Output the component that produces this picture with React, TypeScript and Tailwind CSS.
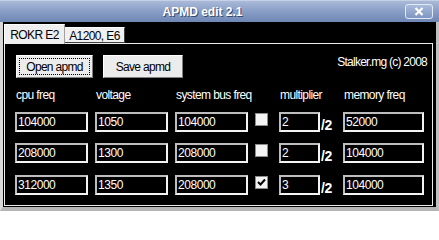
import React from "react";

const sans = { fontFamily: '"Liberation Sans", Arial, sans-serif' };

function Box({ value, w }: { value: string; w: string }) {
  return (
    <div
      className={`${w} h-[20px] bg-black border-2 border-t-[#bdbdbd] border-l-[#bdbdbd] border-b-[#f4f4f4] border-r-[#f4f4f4] flex items-center pl-[1px] text-white text-[12px] leading-none tracking-[-0.45px]`}
    >
      {value}
    </div>
  );
}

function Check({ checked }: { checked?: boolean }) {
  return (
    <div className="w-[13px] h-[13px] mt-[1px] bg-[#f4f4f4] border border-[#8c8c8c] flex items-center justify-center">
      {checked && (
        <svg width="9" height="9" viewBox="0 0 9 9">
          <path d="M1 4 L3.5 6.5 L8 1.5" stroke="#000" strokeWidth="2" fill="none" />
        </svg>
      )}
    </div>
  );
}

function Row({ cpu, volt, bus, checked, mult, mem, className }: { cpu: string; volt: string; bus: string; checked?: boolean; mult: string; mem: string; className?: string }) {
  return (
    <div className={`grid grid-cols-[80px_80px_80px_24px_64px_81px] ${className ?? ""}`}>
      <Box value={cpu} w="w-[73px]" />
      <Box value={volt} w="w-[73px]" />
      <Box value={bus} w="w-[73px]" />
      <Check checked={checked} />
      <div className="flex items-start">
        <Box value={mult} w="w-[41px]" />
        <span className="text-white text-[14px] font-bold leading-none mt-[6px] ml-[1px] tracking-[-0.3px]">
          /2
        </span>
      </div>
      <Box value={mem} w="w-[81px]" />
    </div>
  );
}

export default function App() {
  return (
    <div className="w-[439px] h-[211px] flex flex-col bg-[#c8c8c8] overflow-hidden text-[12px]" style={sans}>
      {/* title bar */}
      <div className="h-[22px] flex items-center bg-gradient-to-b from-[#aab9d8] via-[#889ec6] to-[#6f87b5] border-t border-[#c4d0e6]">
        <div className="flex-1 text-center text-white text-[12px] font-bold [text-shadow:1px_1px_0_#3a4a6a]">
          APMD edit 2.1
        </div>
        <div className="w-[28px] h-[15px] mr-[6px] rounded-[3px] border border-[#e4eaf4] bg-gradient-to-b from-[#a9badb] to-[#7f96c2] flex items-center justify-center">
          <svg width="10" height="9" viewBox="0 0 10 9">
            <path d="M1.5 1 L8.5 8 M8.5 1 L1.5 8" stroke="#fff" strokeWidth="2.2" />
          </svg>
        </div>
      </div>
      {/* body */}
      <div className="flex-1 flex flex-col bg-black border-l-[3px] border-r-[3px] border-b-[4px] border-l-[#d8d8d8] border-r-[#c0c0c0] border-b-[#b4b4b4]">
        {/* tabs */}
        <div className="h-[21px] flex items-end pl-[1px] relative z-10">
          <div className="w-[61px] h-[20px] -mb-px bg-[#eeeeee] border-t border-l border-r border-t-white border-l-white border-r-[#a0a0a0] flex items-center justify-center text-black text-[12px] whitespace-nowrap tracking-[-0.6px]">
            ROKR E2
          </div>
          <div className="w-[60px] h-[16px] bg-[#f0f0f0] border-t border-r border-t-white border-r-[#404040] shadow-[inset_0_-1px_0_#404040] flex items-center justify-center text-black text-[12px] whitespace-nowrap tracking-[-0.6px]">
            A1200, E6
          </div>
        </div>
        {/* panel */}
        <div className="flex-1 ml-[1px] mr-[3px] mb-[1px] border border-[#ececec] flex flex-col">
          <div className="flex items-start mt-[11px] pl-[11px] pr-[5px]">
            <div className="w-[77px] h-[23px] bg-[#ececec] border border-t-white border-l-white border-b-[#808080] border-r-[#808080] p-[2px]">
              <div className="w-full h-full border border-dotted border-black flex items-center justify-center text-black text-[12px] tracking-[-0.7px]">
                Open apmd
              </div>
            </div>
            <div className="w-[80px] h-[23px] ml-[10px] bg-[#ececec] border border-t-white border-l-white border-b-[#808080] border-r-[#808080] flex items-center justify-center text-black text-[12px] tracking-[-0.7px]">
              Save apmd
            </div>
            <div className="flex-1 text-right text-white text-[12px] leading-[14px] tracking-[-0.75px]">Stalker.mg (c) 2008</div>
          </div>
          <div className="mt-[10px] ml-[11px] grid grid-cols-[80px_80px_80px_24px_64px_81px] text-white text-[12px] leading-[14px] tracking-[-0.6px]">
            <span>cpu freq</span>
            <span>voltage</span>
            <span className="whitespace-nowrap">system bus freq</span>
            <span />
            <span>multiplier</span>
            <span>memory freq</span>
          </div>
          <div className="mt-[10px] ml-[10px] flex flex-col">
            <Row cpu="104000" volt="1050" bus="104000" mult="2" mem="52000" />
            <Row cpu="208000" volt="1300" bus="208000" mult="2" mem="104000" className="mt-[11px]" />
            <Row cpu="312000" volt="1350" bus="208000" checked mult="3" mem="104000" className="mt-[12px]" />
          </div>
        </div>
      </div>
    </div>
  );
}
